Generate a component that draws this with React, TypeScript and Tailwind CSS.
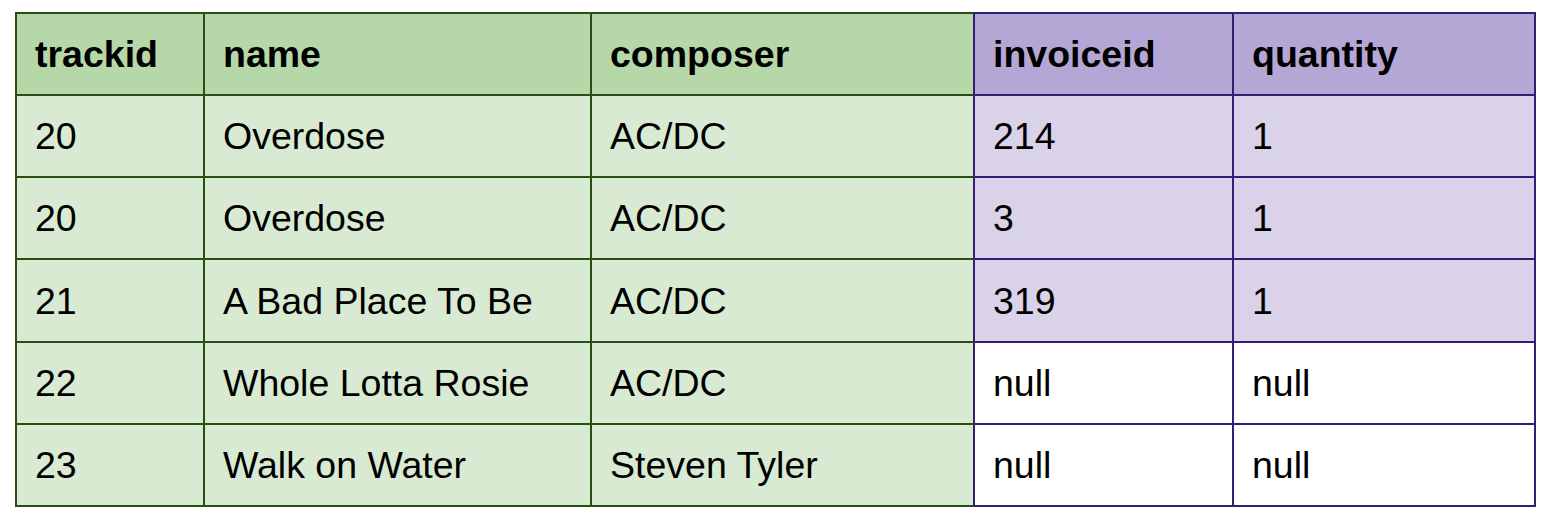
import React from "react";

const G_BORDER = "border-[#274e13]";
const P_BORDER = "border-[#351c75]";

type Row = [string, string, string, string, string];

const rows: Row[] = [
  ["20", "Overdose", "AC/DC", "214", "1"],
  ["20", "Overdose", "AC/DC", "3", "1"],
  ["21", "A Bad Place To Be", "AC/DC", "319", "1"],
  ["22", "Whole Lotta Rosie", "AC/DC", "null", "null"],
  ["23", "Walk on Water", "Steven Tyler", "null", "null"],
];

const widths = ["w-[190px]", "w-[387px]", "w-[383px]", "w-[259px]", "w-[302px]"];

function Cell({
  col,
  text,
  header,
  bg,
  first,
  height,
}: {
  col: number;
  text: string;
  header?: boolean;
  bg: string;
  first?: boolean;
  height: string;
}) {
  const purple = col >= 3;
  const borderColor = purple ? P_BORDER : G_BORDER;
  const classes = [
    "flex items-center shrink-0 pl-[18px] pt-[2px] border-b-2 border-r-2",
    widths[col],
    height,
    bg,
    borderColor,
    col === 2 ? "border-r-[#351c75]" : "",
    col === 0 ? "border-l-2" : "",
    first ? "border-t-2" : "",
    header ? "font-bold" : "",
  ].join(" ");
  return (
    <div className={classes}>
      <span>{text}</span>
    </div>
  );
}

export default function App() {
  const headers = ["trackid", "name", "composer", "invoiceid", "quantity"];
  return (
    <div className="bg-white w-[1550px] h-[522px] pt-[12px] pl-[15px]">
      <div
        className="flex flex-col text-[37.5px] text-black leading-none"
        style={{ fontFamily: '"Liberation Sans", Arial, sans-serif' }}
      >
        <div className="flex">
          {headers.map((h, i) => (
            <Cell
              key={h}
              col={i}
              text={h}
              header
              first
              height="h-[84px]"
              bg={i >= 3 ? "bg-[#b4a7d6]" : "bg-[#b6d7a8]"}
            />
          ))}
        </div>
        {rows.map((r, ri) => (
          <div className="flex" key={ri}>
            {r.map((v, i) => {
              let bg = "bg-[#d9ead3]";
              if (i >= 3) bg = ri < 3 ? "bg-[#d9d2e9]" : "bg-white";
              return (
                <Cell
                  key={i}
                  col={i}
                  text={v}
                  height={ri === 2 ? "h-[83px]" : "h-[82px]"}
                  bg={bg}
                />
              );
            })}
          </div>
        ))}
      </div>
    </div>
  );
}
